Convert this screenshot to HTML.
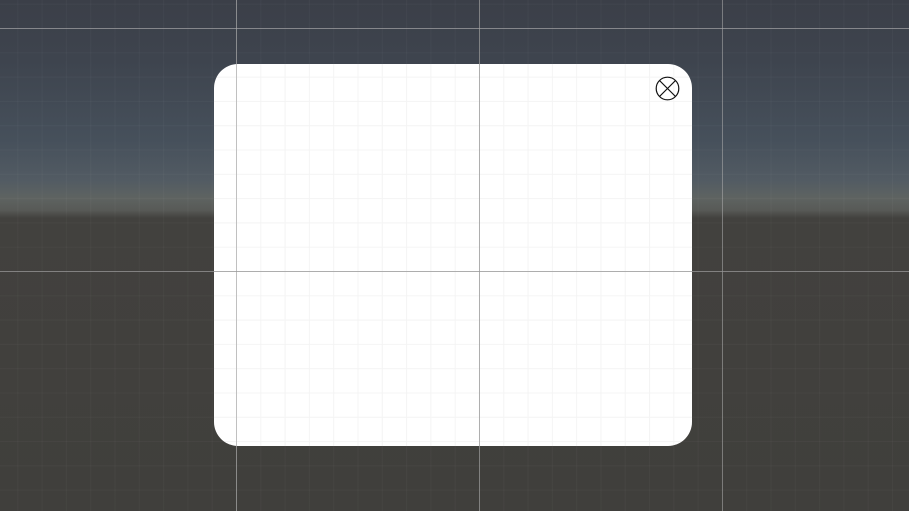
<!DOCTYPE html>
<html><head><style>
html,body{margin:0;padding:0;width:909px;height:511px;overflow:hidden}
body{position:relative;background:linear-gradient(to bottom,#3b3f48 0px,#3e444e 60px,#46505b 140px,#525b63 180px,#5e6361 198px,#585a57 210px,#42413e 218px,#403f3c 511px)}
.g{position:absolute;inset:0;background-image:linear-gradient(to right,rgba(255,255,255,0.028) 1px,transparent 1px),linear-gradient(to bottom,rgba(255,255,255,0.028) 1px,transparent 1px);background-size:24.3px 24.3px;background-position:236px 28px}
.panel{position:absolute;left:214px;top:64px;width:478px;height:382px;border-radius:24px;background-color:#fff;background-image:linear-gradient(to right,#f4f4f4 1px,transparent 1px),linear-gradient(to bottom,#f4f4f4 1px,transparent 1px);background-size:24.3px 24.3px;background-position:22px 207px}
.v{position:absolute;top:0;bottom:0;width:1px}
.h{position:absolute;left:0;right:0;height:1px}
</style></head><body>
<div class="g"></div>
<div class="panel"></div>
<div class="v" style="left:236px;background:rgba(170,170,170,0.7)"></div>
<div class="v" style="left:479px;background:rgba(150,150,150,0.75)"></div>
<div class="v" style="left:722px;background:rgba(170,170,170,0.55)"></div>
<div class="h" style="top:28px;background:rgba(170,170,170,0.65)"></div>
<div class="h" style="top:271px;background:rgba(150,150,150,0.75)"></div>
<svg style="position:absolute;left:655px;top:76px" width="26" height="26" viewBox="0 0 26 26">
<circle cx="12.5" cy="12.5" r="11.3" fill="none" stroke="#111" stroke-width="1.2"/>
<path d="M4.5 4.5L20.5 20.5M20.5 4.5L4.5 20.5" stroke="#111" stroke-width="1.2"/>
</svg>
</body></html>
